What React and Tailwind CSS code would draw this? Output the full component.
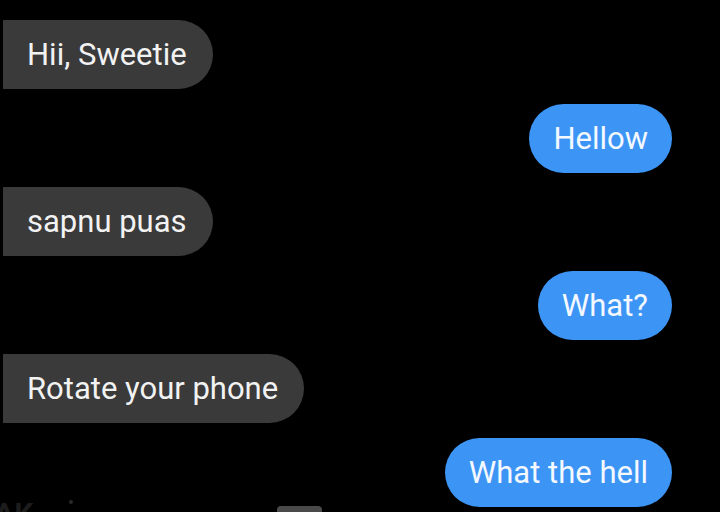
import React from 'react';

const messages = [
  { from: 'them', text: 'Hii, Sweetie' },
  { from: 'me', text: 'Hellow' },
  { from: 'them', text: 'sapnu puas' },
  { from: 'me', text: 'What?' },
  { from: 'them', text: 'Rotate your phone' },
  { from: 'me', text: 'What the hell' },
];

const Bubble = ({ from, text }) => {
  if (from === 'me') {
    return (
      <div className="flex justify-end pr-[48px]">
        <div className="h-[69px] flex items-center px-6 rounded-full bg-[#3c95f5] text-[#f4f8ff] text-[31px] leading-none">
          {text}
        </div>
      </div>
    );
  }
  return (
    <div className="flex justify-start pl-[3px]">
      <div className="h-[69px] flex items-center pl-6 pr-[26px] rounded-l-[28px] rounded-r-full bg-[#3a3a3a] text-[#f2f2f2] text-[31px] leading-none">
        {text}
      </div>
    </div>
  );
};

const App = () => {
  return (
    <main
      className="h-[512px] w-[720px] overflow-hidden bg-black pt-[20px]"
      style={{ fontFamily: 'Roboto, "Noto Sans", sans-serif' }}
    >
      <div className="flex flex-col gap-[14.5px]">
        {messages.map((m, i) => (
          <Bubble key={i} from={m.from} text={m.text} />
        ))}
      </div>

      {/* faint stuff peeking at the bottom */}
      <div className="flex items-start -mt-[8px]">
        <span className="text-[#1c1c1c] text-[30px] font-bold leading-none -ml-[6px]">AK</span>
        <span className="ml-[36px] mt-[1px] w-[4px] h-[4px] rounded-full bg-[#2a2a2a]" />
        <span className="ml-[204px] mt-[7px] w-[45px] h-[8px] rounded-t-sm bg-[#4a4a4a]" />
      </div>
    </main>
  );
};

export default App;
